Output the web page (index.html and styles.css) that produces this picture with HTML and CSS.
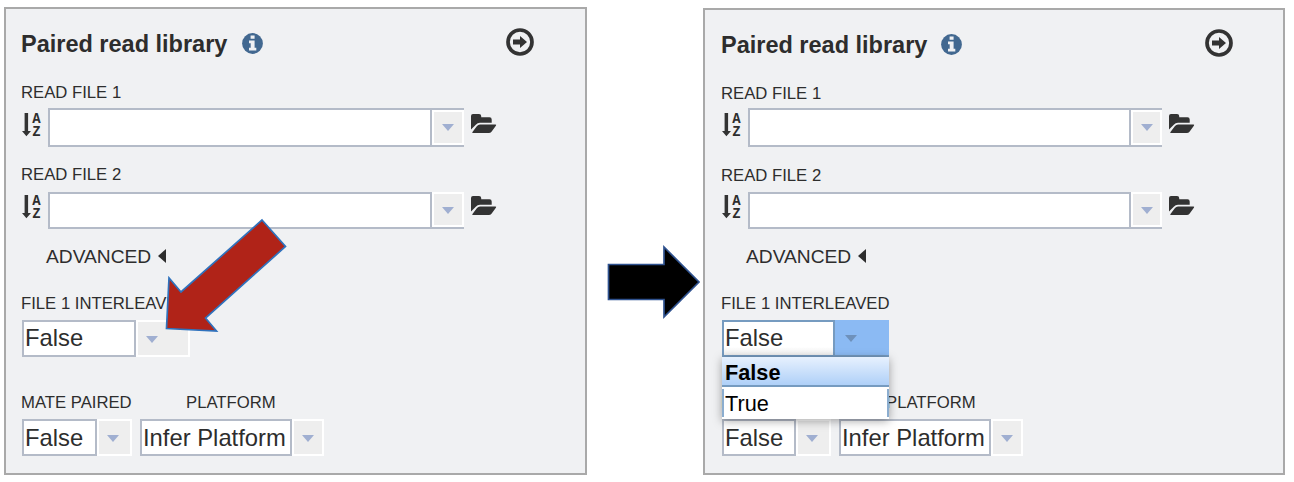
FILE: index.html
```
<!DOCTYPE html>
<html lang="en">
<head>
<meta charset="utf-8">
<title>Paired read library</title>
<link rel="stylesheet" href="styles.css">
</head>
<body>
<svg class="defs" width="0" height="0" aria-hidden="true">
  <symbol id="info" viewBox="0 0 21 21">
    <circle cx="10.5" cy="10.5" r="10.4" fill="#426890"/>
    <path fill="#f0f1f3" d="M8.600 2.600h4v3.200h-4zM7 7.500h5.600v7.200h1.700v2.700H7v-2.700h1.700v-4.500H7z"/>
  </symbol>
  <symbol id="go" viewBox="0 0 28 28">
    <circle cx="14" cy="14" r="12" fill="none" stroke="#333" stroke-width="3.700"/>
    <path fill="#333" d="M7 11.400h7V8l7 6-7 6v-3.400H7z"/>
  </symbol>
  <symbol id="down" viewBox="0 0 9 24">
    <path fill="#333" d="M2.600 0h3.500v18H9l-4.600 5.200L0 18h2.600z"/>
  </symbol>
  <symbol id="folder" viewBox="0 0 26 20">
    <path fill="#333" d="M0 15.500V2Q0 0 2 0H8Q10.200 0 10.200 2V3.300H18.500Q20.700 3.300 20.700 5.400V8.800H9Q6.500 8.800 4.800 10.700Z"/>
    <path fill="#333" d="M1.300 18.200L6 12Q7.200 10.400 9 10.400H24.200Q25.800 10.400 24.900 11.700L20.500 17.700Q19.500 19 17.800 19H2Q.7 19 1.300 18.200Z"/>
  </symbol>
</svg>

<main class="stage">
  <section class="panel">
    <header class="head">
      <h1>Paired read library</h1>
      <svg class="info"><use href="#info"/></svg>
      <svg class="go"><use href="#go"/></svg>
    </header>
    <div class="label first">READ FILE 1</div>
    <div class="file">
      <span class="sort"><svg><use href="#down"/></svg><span class="az"><b>A</b><b>Z</b></span></span>
      <div class="combo wide ruled"><div class="value"></div><div class="drop"><i></i></div></div>
      <svg class="folder"><use href="#folder"/></svg>
    </div>
    <div class="label second">READ FILE 2</div>
    <div class="file low">
      <span class="sort"><svg><use href="#down"/></svg><span class="az"><b>A</b><b>Z</b></span></span>
      <div class="combo wide"><div class="value"></div><div class="drop"><i></i></div></div>
      <svg class="folder"><use href="#folder"/></svg>
    </div>
    <div class="advanced">ADVANCED<i></i></div>
    <div class="label third">FILE 1 INTERLEAVED</div>
    <div class="combo inter"><div class="value">False</div><div class="drop"><i></i></div></div>
    <div class="label pair"><span>MATE PAIRED</span><span>PLATFORM</span></div>
    <div class="choices">
      <div class="combo mate"><div class="value">False</div><div class="drop"><i></i></div></div>
      <div class="combo platform"><div class="value">Infer Platform</div><div class="drop"><i></i></div></div>
    </div>
  </section>

  <section class="panel after">
    <header class="head">
      <h1>Paired read library</h1>
      <svg class="info"><use href="#info"/></svg>
      <svg class="go"><use href="#go"/></svg>
    </header>
    <div class="label first">READ FILE 1</div>
    <div class="file">
      <span class="sort"><svg><use href="#down"/></svg><span class="az"><b>A</b><b>Z</b></span></span>
      <div class="combo wide ruled"><div class="value"></div><div class="drop"><i></i></div></div>
      <svg class="folder"><use href="#folder"/></svg>
    </div>
    <div class="label second">READ FILE 2</div>
    <div class="file low">
      <span class="sort"><svg><use href="#down"/></svg><span class="az"><b>A</b><b>Z</b></span></span>
      <div class="combo wide"><div class="value"></div><div class="drop"><i></i></div></div>
      <svg class="folder"><use href="#folder"/></svg>
    </div>
    <div class="advanced">ADVANCED<i></i></div>
    <div class="label third">FILE 1 INTERLEAVED</div>
    <div class="combo inter open">
      <div class="value">False</div><div class="drop"><i></i></div>
      <div class="menu"><div class="item selected">False</div><div class="item">True</div></div>
    </div>
    <div class="label pair"><span>MATE PAIRED</span><span>PLATFORM</span></div>
    <div class="choices">
      <div class="combo mate"><div class="value">False</div><div class="drop"><i></i></div></div>
      <div class="combo platform"><div class="value">Infer Platform</div><div class="drop"><i></i></div></div>
    </div>
  </section>

  <svg class="pointers" viewBox="0 0 1294 482" aria-hidden="true">
    <path d="M262 220L285.500 246.500L205.500 318L216.500 331L166.500 328.500L169 278L181 292Z" fill="#b02318" stroke="#2f72bd" stroke-width="1.700"/>
    <path d="M608.500 264.500H664V247L699 282L664 317V299.500H608.500Z" fill="#000" stroke="#2f528f" stroke-width="1.700"/>
  </svg>
</main>
</body>
</html>
```
FILE: styles.css
```
* { box-sizing: border-box; }

body {
  margin: 0;
  background: #fff;
  color: #2d2d2d;
  font-family: "Liberation Sans", Arial, sans-serif;
}

.defs { position: absolute; }

.stage {
  position: relative;
  display: flex;
  justify-content: space-between;
  width: 1294px;
  height: 482px;
  padding: 7px 9px 0 4px;
  overflow: hidden;
}

.panel {
  display: flex;
  flex-direction: column;
  width: 583px;
  height: 468px;
  padding-left: 16px;
  border: 2px solid #a9a9a9;
  background: #f0f1f3;
}

.panel.after {
  width: 582px;
  height: 467px;
  margin-top: 1px;
  padding-left: 17px;
}

.panel > * { flex: none; }

.head { display: flex; height: 71px; }
.after .head { height: 70px; }
.head h1 {
  width: 220px;
  margin: 0;
  font-size: 23.5px;
  line-height: 70px;
  white-space: nowrap;
  text-indent: -1px;
}
.head .info { width: 21px; height: 21px; margin-top: 24px; }
.head .go { width: 28px; height: 28px; margin: 19px 0 0 243px; }
.after h1 { width: 219px; }

.label {
  font-size: 16.7px;
  white-space: nowrap;
  text-indent: -1px;
}
.label.first { height: 28px; line-height: 26px; }
.label.second { height: 45px; padding-top: 14px; line-height: 27px; }
.label.third { height: 35px; line-height: 37px; }
.label.pair { display: flex; height: 62px; padding-top: 31px; line-height: 29px; }
.label.pair span:first-child { width: 164px; }
.label.pair span:last-child { text-indent: 0; }
.after .label.first { line-height: 28px; }
.after .label.second { line-height: 29px; }

.file { display: flex; height: 39px; }
.file.low { height: 37px; }
.sort { display: flex; width: 26px; padding-top: 5px; }
.low .sort { padding-top: 3px; }
.sort svg { width: 9px; height: 24px; margin-left: -.5px; }
.az {
  display: flex;
  flex-direction: column;
  width: 12px;
  font: 14px/13px "Liberation Mono", monospace;
  text-align: center;
}
.az b { font-weight: 700; }
.folder { width: 26px; height: 20px; margin: 6px 0 0 7px; }
.low .folder { margin-top: 4px; }

.combo { display: flex; height: 37px; }
.value {
  border: 2px solid #b4bbc8;
  background: #fff;
  font-size: 23.8px;
  line-height: 33px;
  padding-left: 1px;
  white-space: nowrap;
}
.drop {
  display: flex;
  align-items: center;
  justify-content: center;
  border: 2px solid #fff;
  background: #eee;
}
.drop i {
  margin-top: 1px;
  border: solid transparent;
  border-width: 7px 6.5px 0;
  border-top-color: #a0afd1;
}
.wide .value { width: 384px; }
.wide .drop { width: 32px; height: 35px; box-shadow: 0 2px #b4bbc8; }
.after .wide .value { width: 383px; }
.after .wide .drop { width: 31px; }
.ruled { height: 39px; }
.ruled .drop { height: 35px; margin-top: 2px; box-shadow: 0 2px #b4bbc8, 0 -2px #b4bbc8; }
.ruled .drop i { margin-top: -1px; }

.advanced {
  display: flex;
  align-items: center;
  height: 56px;
  padding-left: 24px;
  font-size: 19.2px;
}
.advanced i {
  margin: -2px 0 0 7px;
  border: solid transparent;
  border-width: 7px 8px 7px 0;
  border-right-color: #2d2d2d;
}

.inter { position: relative; }
.inter .value { width: 114px; line-height: 32px; }
.inter .drop { width: 54px; justify-content: flex-start; padding-left: 8px; }
.inter .drop i { margin-top: 2px; }
.choices { display: flex; gap: 8px; }
.mate .value { width: 75px; }
.mate .drop { width: 35px; padding-right: 3px; }
.after .mate .value { width: 74px; }
.platform .value { width: 152px; }
.platform .drop { width: 32px; }

.open { width: 167px; }
.open .value { width: 113px; border-color: #769bc0; background: linear-gradient(#fff 75%, #f0f0f0); }
.open .drop { border: 0; border-bottom: 2px solid #769bc0; background: #8bbaf3; padding-left: 10px; }
.open .drop i { border-top-color: #6e91bb; }
.menu {
  position: absolute;
  z-index: 1;
  top: 37px;
  left: 0;
  width: 167px;
  background: #fff;
  box-shadow: 0 2px 9px rgba(0, 0, 0, .35);
  color: #000;
  font-size: 21.7px;
}
.item {
  height: 28px;
  margin: 2px 0;
  padding-left: 1px;
  border: solid #8badcf;
  border-width: 0 2px;
  line-height: 30px;
}
.item.selected {
  height: 30px;
  margin-top: 0;
  padding-left: 3px;
  border-width: 0 0 2px;
  border-color: #769bc0;
  background: linear-gradient(#e7f1fe, #afd0f8);
  font-weight: 700;
  line-height: 31px;
}

.pointers {
  position: absolute;
  top: 0;
  left: 0;
  width: 1294px;
  height: 482px;
}
```
